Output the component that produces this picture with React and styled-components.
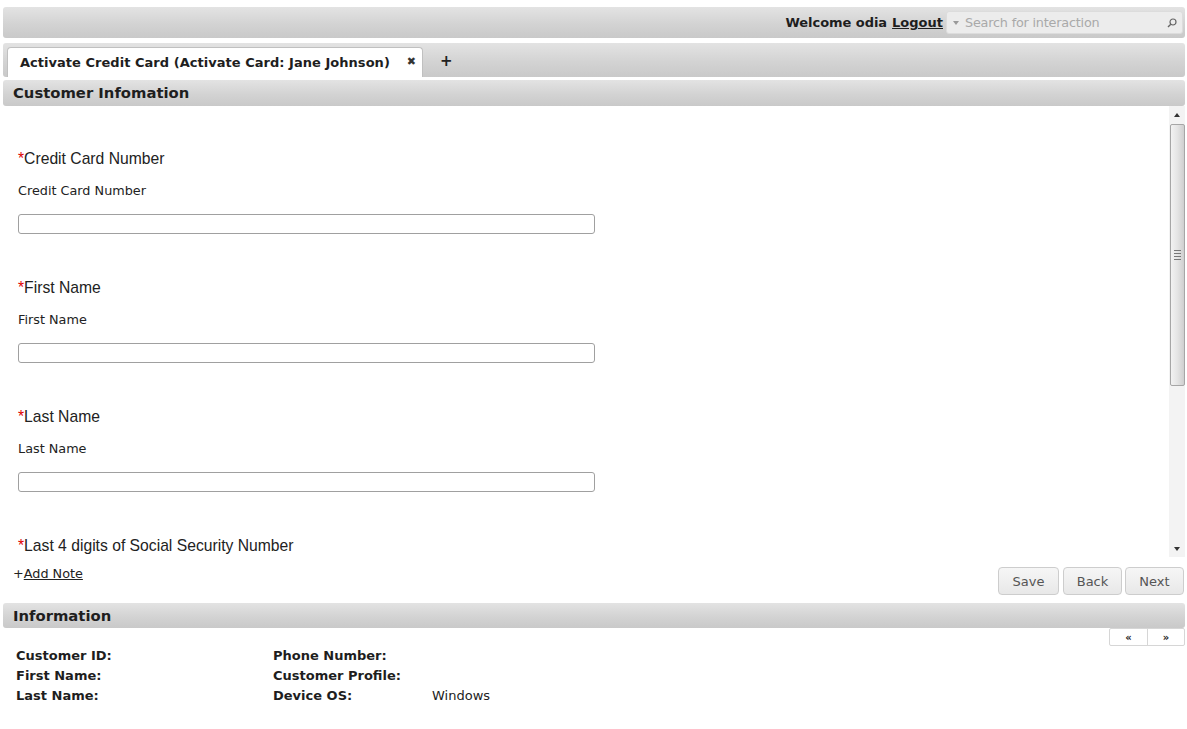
import React from "react";
import styled, { createGlobalStyle } from "styled-components";

const Global = createGlobalStyle`
  html, body { margin: 0; padding: 0; background: #fff; }
  body { font-family: "DejaVu Sans", Verdana, sans-serif; color: #222; }
  * { box-sizing: border-box; }
`;

const Page = styled.div`
  width: 1187px;
  height: 729px;
  padding: 7px 2px 0 3px;
  display: flex;
  flex-direction: column;
  overflow: hidden;
`;

const barGradient = `linear-gradient(to bottom, #e3e3e3 0%, #d3d3d3 55%, #c9c9c9 100%)`;

const TopBar = styled.div`
  height: 31px;
  border-radius: 3px;
  background: ${barGradient};
  display: flex;
  align-items: center;
  justify-content: flex-end;
  padding-right: 2px;
  font-size: 13px;
  font-weight: bold;
  color: #1e1e1e;
`;

const Welcome = styled.span`
  letter-spacing: -0.05px;
`;

const Logout = styled.a`
  margin-left: 5px;
  margin-right: 3px;
  color: #1e1e1e;
  text-decoration: underline;
`;

const SearchBox = styled.div`
  width: 237px;
  height: 23px;
  border-radius: 3px;
  background: #ececec;
  border: 1px solid #dcdcdc;
  display: flex;
  align-items: center;
  padding: 0 5px 0 6px;
  font-weight: normal;
  color: #a9a9a9;
  font-size: 12.8px;
`;

const Caret = styled.span`
  width: 0;
  height: 0;
  border-left: 3.5px solid transparent;
  border-right: 3.5px solid transparent;
  border-top: 4px solid #999;
  margin-right: 6px;
  margin-top: 1px;
`;

const Placeholder = styled.span`
  flex: 1;
  letter-spacing: -0.2px;
`;

const TabBar = styled.div`
  margin-top: 5px;
  height: 34px;
  border-radius: 3px;
  background: ${barGradient};
  display: flex;
  align-items: flex-end;
  padding-left: 4px;
`;

const Tab = styled.div`
  height: 30px;
  width: 416px;
  background: #fff;
  border: 1px solid #c0c0c0;
  border-bottom: none;
  border-radius: 4px 4px 0 0;
  display: flex;
  align-items: center;
  padding: 0 6px 0 12px;
  font-size: 13px;
  font-weight: bold;
  color: #1e1e1e;
`;

const TabTitle = styled.span`
  flex: 1;
  white-space: nowrap;
  letter-spacing: 0.03px;
`;

const TabClose = styled.span`
  font-size: 11px;
  color: #333;
  margin-bottom: 3px;
`;

const AddTab = styled.span`
  height: 30px;
  display: flex;
  align-items: center;
  margin-left: 17px;
  font-size: 15px;
  font-weight: bold;
  color: #222;
  padding-bottom: 3px;
`;

const SectionHeader = styled.div`
  margin-top: ${(p) => p.$mt || 0}px;
  height: ${(p) => p.$h || 26}px;
  border-radius: 3px;
  background: ${barGradient};
  display: flex;
  align-items: center;
  padding-left: 10px;
  padding-bottom: 1px;
  font-size: 14.8px;
  font-weight: bold;
  color: #1e1e1e;
`;

const ContentRow = styled.div`
  height: 451px;
  display: flex;
`;

const FormArea = styled.div`
  flex: 1;
  overflow: hidden;
  padding: 44px 0 0 15px;
`;

const Field = styled.div`
  margin-bottom: 45px;
`;

const BigLabel = styled.div`
  font-family: "Liberation Sans", Arial, sans-serif;
  font-size: 15.7px;
  line-height: 18px;
  height: 18px;
  color: #222;
  margin-bottom: 15px;
  white-space: nowrap;
`;

const Req = styled.span`
  color: #d00;
`;

const SmallLabel = styled.div`
  font-size: 12.8px;
  line-height: 16px;
  height: 16px;
  color: #222;
  margin-bottom: 15px;
`;

const Input = styled.input`
  display: block;
  width: 577px;
  height: 20px;
  border: 1px solid #a0a0a0;
  border-radius: 3px;
  background: #fff;
  padding: 0 4px;
  margin: 0;
  outline: none;
`;

const Scrollbar = styled.div`
  width: 16px;
  background: #f3f3f3;
  display: flex;
  flex-direction: column;
  align-items: center;
`;

const ArrowBtn = styled.div`
  height: 17px;
  width: 16px;
  display: flex;
  align-items: center;
  justify-content: center;
`;

const ArrowUp = styled.span`
  width: 0;
  height: 0;
  border-left: 3.5px solid transparent;
  border-right: 3.5px solid transparent;
  border-bottom: 4px solid #333;
`;

const ArrowDown = styled.span`
  width: 0;
  height: 0;
  border-left: 3.5px solid transparent;
  border-right: 3.5px solid transparent;
  border-top: 4px solid #333;
`;

const Track = styled.div`
  flex: 1;
  width: 16px;
  display: flex;
  flex-direction: column;
  align-items: center;
`;

const Thumb = styled.div`
  margin-top: 1px;
  width: 15px;
  height: 262px;
  border: 1px solid #a6a6a6;
  border-radius: 2px;
  background: linear-gradient(to right, #f2f2f2 0%, #e4e4e4 50%, #cfcfcf 100%);
  display: flex;
  flex-direction: column;
  align-items: center;
  justify-content: center;
  gap: 2px;
`;

const Grip = styled.span`
  width: 7px;
  height: 1px;
  background: #777;
`;

const ActionRow = styled.div`
  height: 46px;
  display: flex;
  justify-content: space-between;
  align-items: flex-start;
`;

const AddNote = styled.div`
  margin-top: 9px;
  margin-left: 10px;
  font-size: 12.8px;
  line-height: 16px;
  color: #222;
  white-space: nowrap;
  display: flex;
`;

const Plus = styled.span`
  color: #222;
`;

const NoteLink = styled.a`
  color: #222;
  text-decoration: underline;
`;

const Buttons = styled.div`
  display: flex;
  gap: 3px;
  margin-top: 10px;
  margin-right: 1px;
`;

const Button = styled.button`
  height: 28px;
  width: ${(p) => p.$w}px;
  margin-right: ${(p) => p.$mr || 0}px;
  border: 1px solid #cdcdcd;
  border-radius: 4px;
  background: linear-gradient(to bottom, #f6f6f6 0%, #e8e8e8 100%);
  font-family: "DejaVu Sans", Verdana, sans-serif;
  font-size: 13px;
  color: #555;
  padding: 0;
`;

const PagerRow = styled.div`
  display: flex;
  justify-content: flex-end;
`;

const Pager = styled.div`
  display: flex;
  height: 18px;
  border: 1px solid #d6d6d6;
  border-radius: 2px;
`;

const PagerCell = styled.div`
  width: 37px;
  display: flex;
  align-items: center;
  justify-content: center;
  font-size: 10px;
  font-weight: bold;
  color: #222;
  & + & { border-left: 1px solid #d6d6d6; }
`;

const InfoGrid = styled.div`
  display: grid;
  grid-template-columns: 257px 159px auto;
  grid-auto-rows: 20px;
  padding-left: 13px;
  margin-top: -1px;
  font-size: 13px;
  align-items: center;
`;

const InfoLabel = styled.div`
  font-weight: bold;
  color: #1e1e1e;
`;

const InfoValue = styled.div`
  color: #222;
`;

const SearchIcon = () => (
  <svg width="10" height="10" viewBox="0 0 10 10">
    <circle cx="6" cy="4" r="3" fill="none" stroke="#666" strokeWidth="1.2" />
    <line x1="3.8" y1="6.2" x2="1" y2="9" stroke="#666" strokeWidth="1.4" />
  </svg>
);

const fields = [
  "Credit Card Number",
  "First Name",
  "Last Name",
  "Last 4 digits of Social Security Number",
];

export default function App() {
  return (
    <>
      <Global />
      <Page>
        <TopBar>
          <Welcome>Welcome odia</Welcome>
          <Logout>Logout</Logout>
          <SearchBox>
            <Caret />
            <Placeholder>Search for interaction</Placeholder>
            <SearchIcon />
          </SearchBox>
        </TopBar>
        <TabBar>
          <Tab>
            <TabTitle>Activate Credit Card (Activate Card: Jane Johnson)</TabTitle>
            <TabClose>✖</TabClose>
          </Tab>
          <AddTab>+</AddTab>
        </TabBar>
        <SectionHeader $mt={3}>Customer Infomation</SectionHeader>
        <ContentRow>
          <FormArea>
            {fields.map((f) => (
              <Field key={f}>
                <BigLabel>
                  <Req>*</Req>
                  {f}
                </BigLabel>
                <SmallLabel>{f}</SmallLabel>
                <Input type="text" />
              </Field>
            ))}
          </FormArea>
          <Scrollbar>
            <ArrowBtn>
              <ArrowUp />
            </ArrowBtn>
            <Track>
              <Thumb>
                <Grip />
                <Grip />
                <Grip />
                <Grip />
              </Thumb>
            </Track>
            <ArrowBtn>
              <ArrowDown />
            </ArrowBtn>
          </Scrollbar>
        </ContentRow>
        <ActionRow>
          <AddNote>
            <Plus>+</Plus>
            <NoteLink>Add Note</NoteLink>
          </AddNote>
          <Buttons>
            <Button $w={61} $mr={1}>Save</Button>
            <Button $w={59}>Back</Button>
            <Button $w={59}>Next</Button>
          </Buttons>
        </ActionRow>
        <SectionHeader $h={25}>Information</SectionHeader>
        <PagerRow>
          <Pager>
            <PagerCell>«</PagerCell>
            <PagerCell>»</PagerCell>
          </Pager>
        </PagerRow>
        <InfoGrid>
          <InfoLabel>Customer ID:</InfoLabel>
          <InfoLabel>Phone Number:</InfoLabel>
          <InfoValue></InfoValue>
          <InfoLabel>First Name:</InfoLabel>
          <InfoLabel>Customer Profile:</InfoLabel>
          <InfoValue></InfoValue>
          <InfoLabel>Last Name:</InfoLabel>
          <InfoLabel>Device OS:</InfoLabel>
          <InfoValue>Windows</InfoValue>
        </InfoGrid>
      </Page>
    </>
  );
}
